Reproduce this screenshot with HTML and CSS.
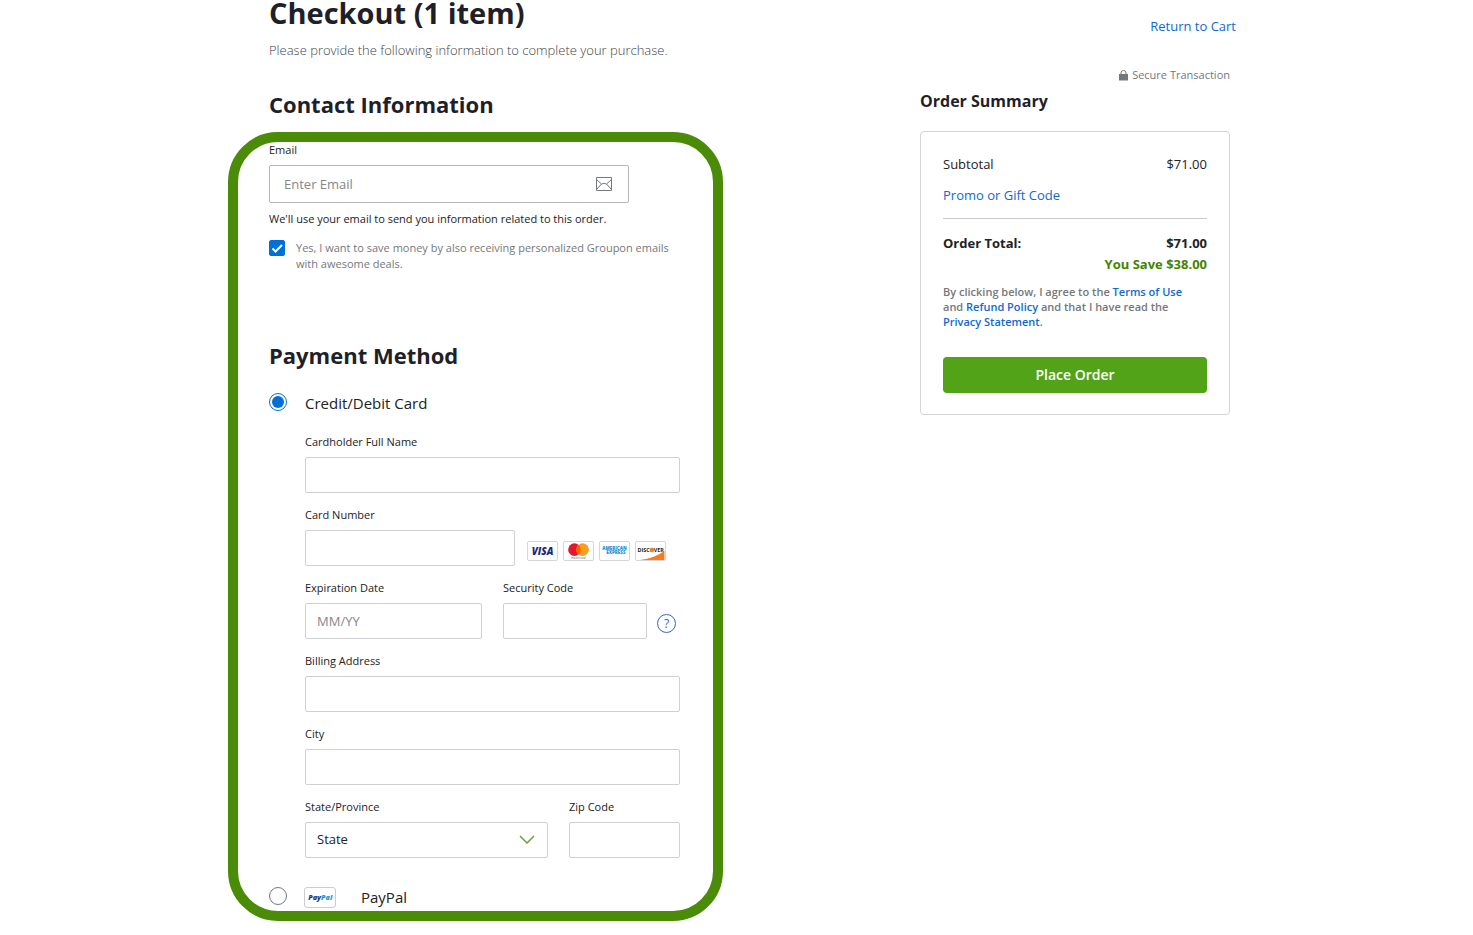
FILE: index.html
```
<!DOCTYPE html>
<html lang="en">
<head>
	<meta charset="utf-8">
	<title>Checkout</title>
	<link rel="stylesheet" href="styles.css">
</head>
<body>

<div class="page">
	<main class="checkout">
		<h1>Checkout (1 item)</h1>
		<p class="intro">Please provide the following information to complete your purchase.</p>
		<h2>Contact Information</h2>

		<form class="frame" id="checkout-form">
			<label class="label" for="email">Email</label>
			<div class="email-box">
				<input class="input email" id="email" type="email" placeholder="Enter Email">
				<svg class="mail-icon" width="16" height="14" viewBox="0 0 16 14" fill="none" stroke="#75787b">
					<path d="M.5 .5h15v13H.5z"/>
					<path d="M.5 2.500L5.500 7q2.500-1.500 5 0l5-4.500M.5 12.500l5-5.500M15.500 12.500l-5-5.500"/>
				</svg>
			</div>
			<p class="note">We'll use your email to send you information related to this order.</p>
			<div class="opt-in">
				<input class="check" id="deals" type="checkbox" checked>
				<svg class="tick" width="16" height="16" viewBox="0 0 16 16" fill="none" stroke="#fff" stroke-width="2"><path d="M3.500 8.500l3 3 6.500-6.500"/></svg>
				<label for="deals">Yes, I want to save money by also receiving personalized Groupon emails with awesome deals.</label>
			</div>

			<h2 class="payment-title">Payment Method</h2>
			<div class="method">
				<input class="radio" id="card" type="radio" name="method" checked>
				<label for="card">Credit/Debit Card</label>
			</div>

			<div class="fields">
				<div class="field">
					<label class="label" for="holder">Cardholder Full Name</label>
					<input class="input" id="holder" type="text">
				</div>
				<div class="field">
					<label class="label" for="number">Card Number</label>
					<div class="number-row">
						<input class="input number" id="number" type="text">
						<div class="brands">
							<svg class="brand" viewBox="0 0 31 20">
								<text x="15.500" y="14" text-anchor="middle" font-size="11" font-weight="800" font-style="italic" fill="#1a2a78">VISA</text>
							</svg>
							<svg class="brand" viewBox="0 0 31 20">
								<circle cx="11" cy="8.500" r="7" fill="#e5162b"/>
								<circle cx="20" cy="8.500" r="7" fill="#f79e1b"/>
								<path d="M15.500 3.100a7 7 0 0 1 0 10.800a7 7 0 0 1 0-10.800" fill="#ff5f00"/>
								<text x="15.500" y="18.500" text-anchor="middle" font-size="3" fill="#555">mastercard</text>
							</svg>
							<svg class="brand" viewBox="0 0 31 20">
								<text x="15.500" y="9" text-anchor="middle" font-size="5" font-weight="800" fill="#2490d5">AMERICAN</text>
								<text x="17" y="13" text-anchor="middle" font-size="5" font-weight="800" fill="#2490d5">EXPRESS</text>
							</svg>
							<svg class="brand" viewBox="0 0 31 20">
								<path d="M4 20Q20 18 31 10v10z" fill="#f47b20"/>
								<text x="1" y="11" font-size="6" font-weight="700" fill="#222">DISC</text>
								<circle cx="17" cy="9" r="2.500" fill="#f47b20"/>
								<text x="19" y="11" font-size="6" font-weight="700" fill="#222">VER</text>
							</svg>
						</div>
					</div>
				</div>
				<div class="row">
					<div class="field expiry">
						<label class="label" for="expiry">Expiration Date</label>
						<input class="input" id="expiry" type="text" placeholder="MM/YY">
					</div>
					<div class="field code">
						<label class="label" for="code">Security Code</label>
						<input class="input" id="code" type="text">
					</div>
					<button class="help" type="button" aria-label="About the security code">?</button>
				</div>
				<div class="field">
					<label class="label" for="address">Billing Address</label>
					<input class="input" id="address" type="text">
				</div>
				<div class="field">
					<label class="label" for="city">City</label>
					<input class="input" id="city" type="text">
				</div>
				<div class="row">
					<div class="field state">
						<label class="label" for="state">State/Province</label>
						<div class="select-box">
							<select class="input" id="state"><option>State</option></select>
							<svg class="chevron" width="16" height="9" viewBox="0 0 16 9" fill="none" stroke="#6da234" stroke-width="1.500"><path d="M1 1l7 7 7-7"/></svg>
						</div>
					</div>
					<div class="field zip">
						<label class="label" for="zip">Zip Code</label>
						<input class="input" id="zip" type="text">
					</div>
				</div>
			</div>

			<div class="method paypal">
				<input class="radio" id="paypal" type="radio" name="method">
				<svg class="paypal-badge" viewBox="0 0 32 21">
					<text x="3" y="13" font-size="8" font-weight="800" font-style="italic" fill="#1f3a82">Pay<tspan fill="#199bd7">Pal</tspan></text>
				</svg>
				<label for="paypal">PayPal</label>
			</div>
		</form>
	</main>

	<aside class="side">
		<a class="return" href="#">Return to Cart</a>
		<p class="secure">
			<svg width="9" height="11" viewBox="0 0 9 11"><path d="M2 5V3a2.500 2.500 0 0 1 5 0v2" fill="none" stroke="#75787b"/><path d="M0 4h9v6.500H0z" fill="#75787b"/></svg>
			Secure Transaction
		</p>
		<h3>Order Summary</h3>
		<div class="summary">
			<div class="line"><span>Subtotal</span><span>$71.00</span></div>
			<a class="promo" href="#">Promo or Gift Code</a>
			<div class="line total"><span>Order Total:</span><span>$71.00</span></div>
			<p class="save">You Save $38.00</p>
			<p class="terms">By clicking below, I agree to the <a href="#">Terms of Use</a> and <a href="#">Refund Policy</a> and that I have read the <a href="#">Privacy Statement</a>.</p>
			<button class="order" type="submit" form="checkout-form">Place Order</button>
		</div>
	</aside>
</div>

</body>
</html>
```
FILE: styles.css
```
* { box-sizing: border-box; }
body { margin: 0; background: #fff; color: #222; font: 13px/20px "Open Sans", sans-serif; }
h1, h2, h3, p { margin: 0; }
h1, h2, h3 { color: #1f1f2a; font-weight: 700; }
a { color: #0f69d0; text-decoration: none; }
input, select, button { margin: 0; font-family: inherit; }
svg { display: block; flex: none; }

.page { display: flex; justify-content: space-between; max-width: 1017px; margin: 0 auto; padding-right: 9px; }

/* left column */
.checkout { width: 495px; }
h1 { padding-left: 41px; font-size: 29px; line-height: 26px; }
.intro { margin-top: 14px; padding-left: 41px; color: #404346; font-weight: 300; }
h2 { font-size: 22px; line-height: 30px; }
.checkout > h2 { margin: 29px 0 13px; padding-left: 41px; }
.frame { border: 10px solid #4a8b08; border-radius: 50px; padding: 0 33px 2px 31px; }

.label { display: block; margin-bottom: 7px; font-size: 11px; line-height: 16px; }
.input { display: block; width: 100%; height: 36px; padding: 0 11px; border: 1px solid #cfd0d2; border-radius: 2px; background: #fff; color: #222; font-size: 13px; }
.input::placeholder { color: #85878a; opacity: 1; }
.email-box { position: relative; width: 360px; }
.email { height: 38px; padding: 0 48px 0 14px; border-color: #b4b6b9; }
.mail-icon { position: absolute; top: 12px; right: 17px; }
.note { margin-top: 8px; font-size: 11px; line-height: 16px; }
.opt-in { position: relative; display: flex; gap: 11px; margin-top: 13px; color: #75787b; font-size: 11px; line-height: 16px; }
.check { appearance: none; flex: none; width: 16px; height: 16px; border-radius: 2px; background: #fff; border: 1px solid #75787b; }
.check:checked { border-color: #0070d8; background: #0070d8; }
.tick { position: absolute; top: 0; left: 0; pointer-events: none; }

.payment-title { margin: 68px 0 23px; }
.method { display: flex; font-size: 15px; line-height: 20px; }
.method label { margin-left: 18px; }
.radio { appearance: none; flex: none; width: 18px; height: 18px; border: 1px solid #75787b; border-radius: 50%; background: #fff; }
.radio:checked { border-color: #0070d8; background: #0070d8; background-clip: content-box; padding: 2px; }

.fields { display: flex; flex-direction: column; gap: 14px; margin: 21px 0 29px; padding-left: 36px; }
.row { display: flex; gap: 21px; }
.number-row { display: flex; align-items: center; gap: 12px; }
.number { width: 210px; }
.brands { display: flex; gap: 5px; padding-top: 5px; }
.brand { width: 31px; height: 20px; border: 1px solid #d5d6d8; border-radius: 2px; }
.expiry { width: 177px; }
.code { width: 144px; }
.help { align-self: flex-end; width: 19px; height: 19px; margin: 0 0 6px -11px; padding: 0; border: 1px solid #3568c4; border-radius: 50%; background: none; color: #3568c4; font-size: 12px; line-height: 16px; }
.state { width: 243px; }
.zip { flex: 1; }
.select-box { position: relative; }
select.input { padding-bottom: 2px; appearance: none; }
.chevron { position: absolute; top: 13px; right: 13px; pointer-events: none; }
.paypal { height: 22px; }
.paypal-badge { width: 32px; height: 21px; margin-left: 17px; border: 1px solid #ccc; border-radius: 3px; }
.paypal label { margin-left: 25px; }

/* right column */
.side { width: 316px; padding: 16px 6px 0 0; }
.return { display: block; margin-right: -6px; text-align: right; }
.secure { display: flex; justify-content: flex-end; align-items: center; gap: 4px; margin: 31px 0 7px; color: #75787b; font-size: 11px; line-height: 16px; }
h3 { margin-bottom: 19px; font-size: 16px; line-height: 22px; }
.summary { padding: 22px 22px 21px; border: 1px solid #d3d4d6; border-radius: 4px; }
.line { display: flex; justify-content: space-between; }
.promo { display: block; margin: 11px 0 13px; }
.total { padding-top: 14px; border-top: 1px solid #c8c9cb; font-weight: 700; }
.save { margin-top: 1px; color: #428500; font-weight: 700; text-align: right; }
.terms { margin: 10px 0 28px; padding-right: 20px; color: #75787b; font-size: 11px; line-height: 15px; font-weight: 600; }
.order { display: block; width: 100%; height: 36px; padding: 0 0 2px; border: 0; border-radius: 4px; background: #53a318; color: #fff; font-size: 14px; font-weight: 600; }
```
